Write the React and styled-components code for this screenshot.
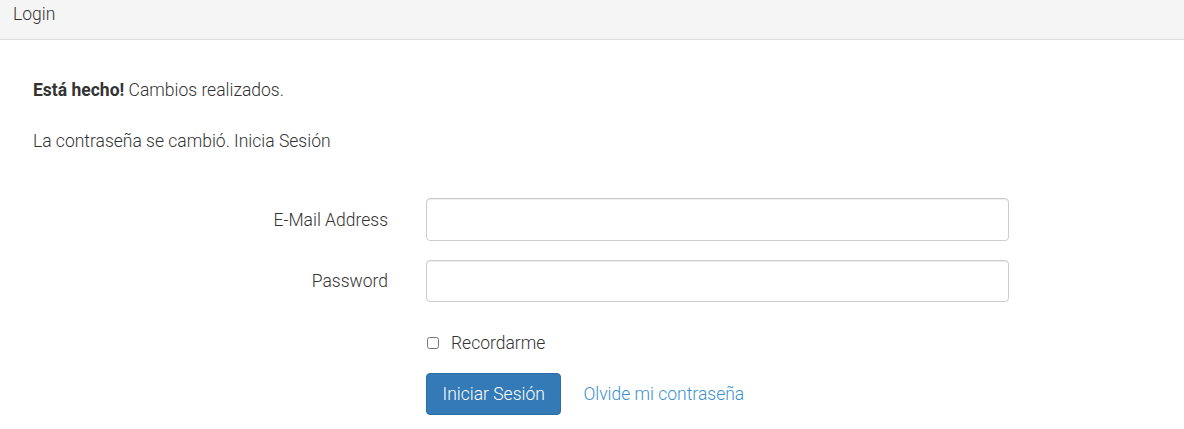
import React from "react";
import styled, { createGlobalStyle } from "styled-components";

const Global = createGlobalStyle`
  html, body { margin: 0; padding: 0; background: #fff; }
  body {
    font-family: Roboto, "Open Sans", "Liberation Sans", sans-serif;
    font-size: 17.5px;
    font-weight: 300;
    line-height: 22px;
    color: #333;
  }
  * { box-sizing: border-box; }
`;

const Panel = styled.div`
  width: 100%;
`;

const PanelHeading = styled.div`
  height: 40px;
  padding: 3px 13px 0;
  background: #f5f5f5;
  border-bottom: 1px solid #ddd;
  color: #333;
`;

const PanelBody = styled.div`
  padding: 39px 33px 0;
`;

const Message = styled.p`
  margin: 0 0 ${(p) => p.$after || 0}px;
`;

const Strong = styled.strong`
  font-weight: 700;
`;

const Form = styled.form`
  margin-top: 46px;
  display: flex;
  flex-direction: column;
  gap: 19px;
`;

const Row = styled.div`
  display: flex;
  align-items: center;
  gap: 38px;
  margin-top: ${(p) => p.$top || 0}px;
`;

const Label = styled.label`
  width: 355px;
  text-align: right;
  color: #333;
`;

const Field = styled.div`
  width: 583px;
  display: flex;
  align-items: center;
  gap: 22px;
`;

const Input = styled.input`
  width: 100%;
  height: ${(p) => p.$h || 42}px;
  border: 1px solid #ccc;
  border-radius: 4px;
  box-shadow: inset 0 1px 1px rgba(0, 0, 0, 0.075);
  font: inherit;
  padding: 6px 12px;
  outline: none;
`;

const CheckLabel = styled.label`
  display: flex;
  align-items: center;
  gap: 12px;
  margin-left: 1px;
`;

const Checkbox = styled.input`
  margin: 0;
  width: 12px;
  height: 12px;
`;

const Button = styled.button`
  height: 42px;
  padding: 0 15.5px;
  background: #337ab7;
  border: 1px solid #2e6da4;
  border-radius: 4px;
  color: #fff;
  font: inherit;
  cursor: pointer;
`;

const Link = styled.a`
  color: #3b8fd0;
  text-decoration: none;
`;

export default function App() {
  return (
    <>
      <Global />
      <Panel>
        <PanelHeading>Login</PanelHeading>
        <PanelBody>
          <Message $after={29}>
            <Strong>Está hecho!</Strong> Cambios realizados.
          </Message>
          <Message>La contraseña se cambió. Inicia Sesión</Message>
          <Form onSubmit={(e) => e.preventDefault()}>
            <Row>
              <Label htmlFor="email">E-Mail Address</Label>
              <Field>
                <Input id="email" type="email" $h={43} />
              </Field>
            </Row>
            <Row>
              <Label htmlFor="password">Password</Label>
              <Field>
                <Input id="password" type="password" $h={42} />
              </Field>
            </Row>
            <Row $top={11}>
              <Label as="div" />
              <Field>
                <CheckLabel>
                  <Checkbox type="checkbox" />
                  Recordarme
                </CheckLabel>
              </Field>
            </Row>
            <Row $top={0}>
              <Label as="div" />
              <Field>
                <Button type="submit">Iniciar Sesión</Button>
                <Link href="#">Olvide mi contraseña</Link>
              </Field>
            </Row>
          </Form>
        </PanelBody>
      </Panel>
    </>
  );
}
